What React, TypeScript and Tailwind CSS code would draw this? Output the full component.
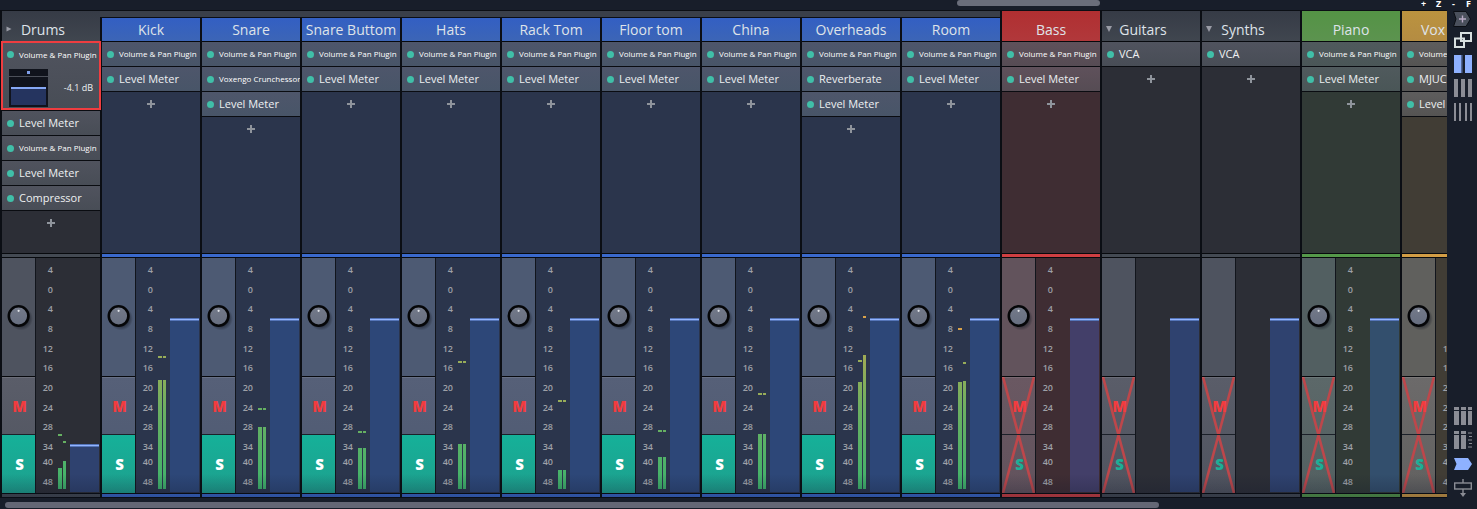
import React from 'react';

type Meter = { bars: [number, number]; peaks: [number, number] };

type Theme = {
  header: string;
  row: string;
  body: string;
  strip: string;
  channel: string;
  button: string;
  fader: string;
};

type Track = {
  name: string;
  theme: Theme;
  plugins: string[];
  fader: number;
  meter?: Meter;
  folder?: 'open' | 'closed';
  vca?: boolean;
  muted?: boolean;
  alignLeft?: boolean;
  expanded?: boolean;
  nested?: boolean;
};

const slate: Theme = {
  header: 'bg-linear-to-b from-[#363b46] to-[#40464f]',
  row: 'bg-linear-to-b from-[#50535e] to-[#484d56]',
  body: 'bg-[#2c2e36]',
  strip: 'bg-[#444a53]',
  channel: 'bg-[#4e535f]',
  button: 'bg-linear-to-b from-[#5a5d69] to-[#50545f]',
  fader: 'bg-[#2f426f]',
};

const blue: Theme = {
  header: 'bg-linear-to-b from-[#335fc3] to-[#3c65b6]',
  row: 'bg-linear-to-b from-[#4e566b] to-[#485568]',
  body: 'bg-[#2b354c]',
  strip: 'bg-[#3a69cc]',
  channel: 'bg-[#4d5a73]',
  button: 'bg-linear-to-b from-[#566078] to-[#4d5971]',
  fader: 'bg-[#2d4778]',
};

const red: Theme = {
  header: 'bg-linear-to-b from-[#b02f31] to-[#b1383b]',
  row: 'bg-linear-to-b from-[#5f515b] to-[#564c54]',
  body: 'bg-[#3f2d33]',
  strip: 'bg-[#cf3f42]',
  channel: 'bg-[#62535c]',
  button: 'bg-linear-to-b from-[#6a5862] to-[#62535d]',
  fader: 'bg-[#433f69]',
};

const green: Theme = {
  header: 'bg-linear-to-b from-[#549345] to-[#5c934f]',
  row: 'bg-linear-to-b from-[#505a5d] to-[#4a5657]',
  body: 'bg-[#313a36]',
  strip: 'bg-[#55994a]',
  channel: 'bg-[#525f61]',
  button: 'bg-linear-to-b from-[#5c6869] to-[#536061]',
  fader: 'bg-[#334f6d]',
};

const amber: Theme = {
  header: 'bg-linear-to-b from-[#bb933f] to-[#b48c42]',
  row: 'bg-linear-to-b from-[#5e5d5d] to-[#555453]',
  body: 'bg-[#413d35]',
  strip: 'bg-[#d29d45]',
  channel: 'bg-[#60605d]',
  button: 'bg-linear-to-b from-[#6c6a6a] to-[#626160]',
  fader: 'bg-[#47536b]',
};

const VP = 'Volume & Pan Plugin';
const LM = 'Level Meter';

const drums: Track = {
  name: 'Drums',
  theme: slate,
  plugins: [VP, LM, VP, LM, 'Compressor'],
  fader: 48,
  meter: { bars: [21, 28], peaks: [53, 46] },
  folder: 'closed',
  expanded: true,
};

const drumTracks: Track[] = [
  { name: 'Kick', theme: blue, plugins: [VP, LM], fader: 174, meter: { bars: [109, 109], peaks: [131, 131] } },
  { name: 'Snare', theme: blue, plugins: [VP, 'Voxengo Crunchessor', LM], fader: 174, meter: { bars: [62, 62], peaks: [79, 79] } },
  { name: 'Snare Buttom', theme: blue, plugins: [VP, LM], fader: 174, meter: { bars: [41, 41], peaks: [56, 56] } },
  { name: 'Hats', theme: blue, plugins: [VP, LM], fader: 174, meter: { bars: [45, 45], peaks: [126, 126] } },
  { name: 'Rack Tom', theme: blue, plugins: [VP, LM], fader: 174, meter: { bars: [19, 19], peaks: [87, 87] } },
  { name: 'Floor tom', theme: blue, plugins: [VP, LM], fader: 174, meter: { bars: [32, 32], peaks: [57, 57] } },
  { name: 'China', theme: blue, plugins: [VP, LM], fader: 174, meter: { bars: [55, 55], peaks: [94, 94] } },
  { name: 'Overheads', theme: blue, plugins: [VP, 'Reverberate', LM], fader: 174, meter: { bars: [107, 134], peaks: [127, 171] } },
  { name: 'Room', theme: blue, plugins: [VP, LM], fader: 174, meter: { bars: [107, 108], peaks: [159, 125] } },
];

const otherTracks: Track[] = [
  { name: 'Bass', theme: red, plugins: [VP, LM], fader: 174, muted: true },
  { name: 'Guitars', theme: slate, plugins: ['VCA'], fader: 174, muted: true, folder: 'open', vca: true },
  { name: 'Synths', theme: slate, plugins: ['VCA'], fader: 174, muted: true, folder: 'open', vca: true },
  { name: 'Piano', theme: green, plugins: [VP, LM], fader: 174, muted: true },
  { name: 'Vox', theme: amber, plugins: [VP, 'MJUC', LM], fader: 174, muted: true, alignLeft: true },
];

function PluginRow({ name, theme, divider = true }: { name: string; theme: string; divider?: boolean }) {
  const long = name.length > 14;
  return (
    <button
      type="button"
      className={`flex h-[25px] w-full items-center gap-[5px] overflow-hidden pl-[5px] text-left ${theme} ${
        divider ? 'border-b border-[#0a0c11]' : ''
      }`}
    >
      <span className="size-[7px] shrink-0 rounded-full bg-[#40bfa8]" />
      <span
        className={
          long
            ? 'text-[8px] whitespace-nowrap text-white'
            : 'text-[11px] whitespace-nowrap text-[#eef0f2]'
        }
      >
        {name}
      </span>
    </button>
  );
}

function ExpandedPlugin({ theme }: { theme: Theme }) {
  return (
    <div className={`relative h-[69px] border-b border-[#0a0c11] ${theme.row}`}>
      <PluginRow name={VP} theme="" divider={false} />
      <div className="flex items-center justify-between pt-[2px] pr-[7px] pl-[7px]">
        <div className="flex w-[39px] flex-col gap-px">
          <div className="flex h-[7px] items-center justify-center bg-[#10131c]">
            <span className="h-[3px] w-[3px] bg-[#7f9ee8]" />
          </div>
          <div className="flex h-[30px] flex-col justify-end bg-[#10131c] p-[2px]">
            <div className="h-[18px] border-t-2 border-[#86a8f5] bg-[#25345f]" />
          </div>
        </div>
        <span className="text-[9px] text-[#eef0f2]">-4.1 dB</span>
      </div>
      <span className="pointer-events-none absolute -inset-x-px -top-px bottom-0 border-2 border-[#ef3d40]" />
    </div>
  );
}

function AddPlugin() {
  return (
    <button type="button" aria-label="Add plugin" className="flex h-6 w-full items-center justify-center">
      <svg viewBox="0 0 8 8" className="size-2" stroke="#8f949c" strokeWidth="2">
        <path d="M4 0V8M0 4H8" />
      </svg>
    </button>
  );
}

function Knob({ name }: { name: string }) {
  return (
    <label className="relative block size-[28px]">
      <input type="range" aria-label={`${name} pan`} className="absolute inset-0 size-full opacity-0" />
      <svg viewBox="0 0 28 28" className="pointer-events-none size-full">
        <defs>
          <radialGradient id="knob-shadow">
            <stop offset="0.6" stopColor="#11151f" stopOpacity="0.6" />
            <stop offset="1" stopColor="#11151f" stopOpacity="0" />
          </radialGradient>
          <linearGradient id="knob-face" x1="0" y1="0" x2="0" y2="1">
            <stop offset="0" stopColor="#747a8a" />
            <stop offset="1" stopColor="#666e80" />
          </linearGradient>
        </defs>
        <circle cx="16" cy="16.5" r="12" fill="url(#knob-shadow)" />
        <circle cx="13.6" cy="14" r="9.8" fill="url(#knob-face)" stroke="#050608" strokeWidth="2.6" />
        <circle cx="13.6" cy="8.8" r="1.1" fill="#e2e5ea" />
      </svg>
    </label>
  );
}

function Scale() {
  return (
    <div className="w-[15px] pt-[7px] text-right text-[9px] font-semibold text-[#9da0a7]">
      <ul className="flex h-[187px] flex-col justify-between leading-[10px]">
        {[4, 0, 4, 8, 12, 16, 20, 24, 28, 34].map((n, i) => (
          <li key={i}>{n}</li>
        ))}
      </ul>
      <ul className="leading-5">
        <li>40</li>
        <li>48</li>
      </ul>
    </div>
  );
}

function peakColor(level: number) {
  if (level > 150) return 'bg-[#d9a24a]';
  if (level > 80) return 'bg-[#97ac59]';
  return 'bg-[#66b062]';
}

function MeterBar({ level, peak, wide }: { level: number; peak: number; wide?: boolean }) {
  return (
    <div className={`relative flex h-full items-end ${wide ? 'w-1' : 'w-[3px]'}`}>
      <div
        className="w-full bg-[linear-gradient(to_top,#3fb36c,#6db062_80px,#9cab55_130px,#c8a34c)] bg-[length:100%_171px] bg-bottom"
        style={{ height: level }}
      />
      <div className={`absolute inset-x-0 h-[2px] ${peakColor(peak)}`} style={{ bottom: peak }} />
    </div>
  );
}

function ChannelControls({ track }: { track: Track }) {
  const { theme, muted, vca, name } = track;
  return (
    <div className="flex w-[34px] shrink-0 flex-col border-r border-[#12151c]">
      <div className={`flex h-[119px] items-center justify-center border-b border-[#07090d] pb-[2px] ${theme.channel}`}>
        {!vca && <Knob name={name} />}
      </div>
      <div className={`relative flex h-[116px] flex-col ${theme.button}`}>
        {muted && (
          <svg viewBox="0 0 33 116" preserveAspectRatio="none" className="absolute inset-0 size-full" stroke="#bd474b" strokeWidth="2.6">
            <path d="M1 0L32 116M32 0L1 116" />
          </svg>
        )}
        <button
          type="button"
          aria-label={`Mute ${name}`}
          className="relative h-[58px] border-t border-b border-t-white/10 border-b-[#1b2029] pl-[2px] text-[15px] font-extrabold text-[#f23c3f]"
        >
          M
        </button>
        <button
          type="button"
          aria-label={`Solo ${name}`}
          className={
            muted
              ? 'relative h-[58px] pl-[2px] text-[15px] font-extrabold text-[#1caf97]'
              : 'relative h-[58px] bg-linear-to-b from-[#15b199] to-[#1d9f8d] pl-[2px] text-[15px] font-extrabold text-white'
          }
        >
          S
        </button>
      </div>
    </div>
  );
}

function Channel({ track }: { track: Track }) {
  const { theme, meter, fader, vca, name } = track;
  return (
    <>
      <div className={`h-[5px] border-y border-[#07090d] ${theme.strip}`} />
      <div className="relative">
        <div className="flex h-[235px]">
          <ChannelControls track={track} />
          <div className="flex flex-1 pl-[2px]">
            {vca ? <div className="w-[15px]" /> : <Scale />}
            <div className="flex w-[17px] gap-px pr-1 pb-1 pl-[5px]">
              {meter && (
                <>
                  <MeterBar level={meter.bars[0]} peak={meter.peaks[0]} wide />
                  <MeterBar level={meter.bars[1]} peak={meter.peaks[1]} />
                </>
              )}
            </div>
            <label className="relative flex w-[29px] items-end pb-px">
              <input type="range" aria-label={`${name} volume`} className="absolute inset-0 size-full opacity-0" />
              <span className={`block w-full ${theme.fader}`} style={{ height: fader }}>
                <span className="block h-[3px] border-y border-[#5575b8] bg-[#93b4ff]" />
              </span>
            </label>
          </div>
        </div>
        <div className={`h-[5px] border-y border-[#07090d] ${theme.strip}`} />
        <div className="pointer-events-none absolute inset-x-0 bottom-0 h-6 bg-linear-to-b from-[#10183a]/0 to-[#10162a]/30" />
      </div>
    </>
  );
}

function Triangle({ open }: { open: boolean }) {
  return (
    <svg viewBox="0 0 6 6" className="absolute top-2 left-1 size-[6px]" fill="#9a9ca6">
      <path d={open ? 'M0 0H6L3 6Z' : 'M0.5 0.5L5.5 3L0.5 5.5Z'} />
    </svg>
  );
}

function Strip({ track }: { track: Track }) {
  const { theme, name, folder, alignLeft, nested } = track;
  const align = folder ? 'justify-center pr-4' : alignLeft ? 'pl-[19px]' : 'justify-center';
  return (
    <section className={`flex w-[98px] shrink-0 flex-col ${theme.body}`}>
      <header className={`border-b border-[#07090d] ${nested ? '' : 'pt-[7px]'} ${theme.header}`}>
        <h2 className={`relative flex h-[23px] items-center text-[14px] whitespace-nowrap text-[#dfe3e9] ${align}`}>
          {folder && <Triangle open={folder === 'open'} />}
          {name}
        </h2>
      </header>
      <div className="flex-1">
        {track.plugins.map((p, i) =>
          i === 0 && track.expanded ? <ExpandedPlugin key={i} theme={theme} /> : <PluginRow key={i} name={p} theme={theme.row} />,
        )}
        <AddPlugin />
      </div>
      <Channel track={track} />
    </section>
  );
}

function ToolButton({ label, children }: { label: string; children: React.ReactNode }) {
  return (
    <button type="button" aria-label={label} className="flex h-6 w-full items-center pl-[7px]">
      <svg viewBox="0 0 18 18" className="size-[18px]" fill="none">
        {children}
      </svg>
    </button>
  );
}

function ToolBar() {
  return (
    <aside className="flex w-[30px] shrink-0 flex-col justify-between pb-[9px]">
      <div>
        <button type="button" aria-label="Add track" className="flex h-[18px] w-full items-center pl-[6px]">
          <svg viewBox="0 0 18 16" className="h-4 w-[18px]" fill="none">
            <path d="M0.5 0.5H13L17.5 8L13 15.5H0.5L3 8Z" fill="#4a505c" stroke="#0b0e14" />
            <path d="M9.5 4.5V11.5M6 8H13" stroke="#b7a9c4" strokeWidth="1.4" />
          </svg>
        </button>
        <ToolButton label="Detach window">
          <rect x="7" y="2" width="10" height="8" stroke="#d7dfdf" strokeWidth="2" />
          <rect x="1" y="7.5" width="9" height="8.5" stroke="#d7dfdf" strokeWidth="2" />
        </ToolButton>
        <ToolButton label="Wide strips">
          <path d="M0 0H7.5V18H0ZM11 0H18V18H11Z" fill="#8eb1ff" />
          <path d="M8.5 0V18" stroke="#34456b" />
        </ToolButton>
        <ToolButton label="Medium strips">
          <path d="M0 0H4V18H0ZM7 0H11V18H7ZM14 0H18V18H14Z" fill="#8b8d95" />
        </ToolButton>
        <ToolButton label="Narrow strips">
          <path d="M0 0H2V18H0ZM5 0H7V18H5ZM11 0H13V18H11ZM16 0H18V18H16Z" fill="#8b8d95" />
        </ToolButton>
      </div>
      <div>
        <ToolButton label="Show mixer racks">
          <path d="M0 0H5V3H0ZM7 0H12V3H7ZM14 0H18V3H14ZM0 4H5V18H0ZM7 4H12V18H7ZM14 4H18V18H14Z" fill="#8b8d95" />
        </ToolButton>
        <ToolButton label="Show meters">
          <path d="M0 0H5V3H0ZM7 0H12V3H7ZM0 4H5V18H0ZM7 4H12V18H7Z" fill="#8b8d95" />
          <path d="M14 2H18M15 5.5H18M14 9H18M15 12.5H18M14 16H18" stroke="#8b8d95" />
        </ToolButton>
        <ToolButton label="Show tracks">
          <path d="M0 3H14L18 9L14 15H0L2.5 9Z" fill="#8eb1ff" />
        </ToolButton>
        <ToolButton label="Show faders">
          <path d="M9 0V4M9 10V15" stroke="#8b8d95" strokeWidth="1.4" />
          <rect x="0.7" y="4" width="16.6" height="6" stroke="#8b8d95" strokeWidth="1.4" />
          <path d="M6 14H12L9 18Z" fill="#8b8d95" />
        </ToolButton>
      </div>
    </aside>
  );
}

export default function App() {
  return (
    <div className="flex min-h-screen flex-col overflow-hidden bg-[#181e2a] font-['Open_Sans','Noto_Sans',sans-serif]">
      <div className="flex h-[10px] items-start">
        <div className="flex-1 pl-[64.8%]">
          <div className="h-[6px] w-[143px] rounded-full bg-[#6a6e7b]" />
        </div>
        <nav className="flex pr-px text-[9px] leading-[8px] font-bold text-white">
          {['+', 'Z', '-', 'F'].map((k) => (
            <button key={k} type="button" className="w-[15px]">
              {k}
            </button>
          ))}
        </nav>
      </div>
      <div className="flex flex-1">
        <main className="flex min-w-0 flex-1 flex-col">
          <div className="flex flex-1 overflow-hidden border-t border-[#0b0e14] bg-[#0b0e14] pl-[2px]">
            <Strip track={drums} />
            <div className="flex shrink-0 flex-col">
              <div className="h-[7px] border-b border-[#0b0e14] bg-[#3a3f49]" />
              <div className="flex flex-1 gap-[2px] pl-[2px]">
                {drumTracks.map((t) => (
                  <Strip key={t.name} track={{ ...t, nested: true }} />
                ))}
              </div>
            </div>
            <div className="flex shrink-0 gap-[2px] pl-[2px]">
              {otherTracks.map((t) => (
                <Strip key={t.name} track={t} />
              ))}
            </div>
          </div>
          <div className="h-[11px] pt-1 pl-[5px]">
            <div className="h-[6px] w-4/5 rounded-full bg-[#646775]" />
          </div>
        </main>
        <ToolBar />
      </div>
    </div>
  );
}
